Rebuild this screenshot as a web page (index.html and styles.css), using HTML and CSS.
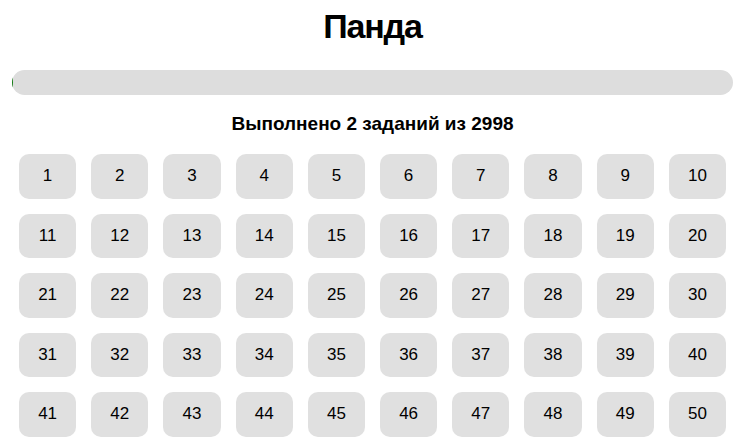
FILE: index.html
```html
<!DOCTYPE html>
<html lang="ru">
<head>
<meta charset="utf-8">
<title>Панда</title>
<link rel="stylesheet" href="styles.css">
</head>
<body>
<div class="page">
  <h1 class="title">Панда</h1>
  <div class="progress"><div class="progress-fill" style="width: 0.0667%"></div></div>
  <p class="status">Выполнено 2 заданий из 2998</p>
  <div class="grid">
    <button class="task">1</button><button class="task">2</button><button class="task">3</button><button class="task">4</button><button class="task">5</button><button class="task">6</button><button class="task">7</button><button class="task">8</button><button class="task">9</button><button class="task">10</button>
    <button class="task">11</button><button class="task">12</button><button class="task">13</button><button class="task">14</button><button class="task">15</button><button class="task">16</button><button class="task">17</button><button class="task">18</button><button class="task">19</button><button class="task">20</button>
    <button class="task">21</button><button class="task">22</button><button class="task">23</button><button class="task">24</button><button class="task">25</button><button class="task">26</button><button class="task">27</button><button class="task">28</button><button class="task">29</button><button class="task">30</button>
    <button class="task">31</button><button class="task">32</button><button class="task">33</button><button class="task">34</button><button class="task">35</button><button class="task">36</button><button class="task">37</button><button class="task">38</button><button class="task">39</button><button class="task">40</button>
    <button class="task">41</button><button class="task">42</button><button class="task">43</button><button class="task">44</button><button class="task">45</button><button class="task">46</button><button class="task">47</button><button class="task">48</button><button class="task">49</button><button class="task">50</button>
  </div>
</div>
</body>
</html>
```

FILE: styles.css
```css
html, body {
  margin: 0;
  padding: 0;
  background: #ffffff;
}

body {
  font-family: "Liberation Sans", Arial, sans-serif;
  color: #000000;
}

.page {
  padding: 0 12px;
}

.title {
  margin: 5px 0 0;
  font-size: 34px;
  line-height: 42px;
  font-weight: bold;
  letter-spacing: -1.2px;
  text-align: center;
}

.progress {
  margin-top: 23px;
  height: 25px;
  border-radius: 12.5px;
  background: #dddddd;
  overflow: hidden;
}

.progress-fill {
  height: 100%;
  background: #137a13;
}

.status {
  margin: 18px 0 0;
  font-size: 19px;
  line-height: 21px;
  font-weight: bold;
  text-align: center;
}

.grid {
  margin-top: 20px;
  padding: 0 7px;
  display: grid;
  grid-template-columns: repeat(10, 1fr);
  gap: 15px;
}

.task {
  border: none;
  margin: 0;
  padding: 13px 0;
  line-height: 18.5px;
  font-family: "Liberation Sans", Arial, sans-serif;
  font-size: 17px;
  color: #000000;
  background: #e0e0e0;
  border-radius: 10px;
  text-align: center;
}
```
